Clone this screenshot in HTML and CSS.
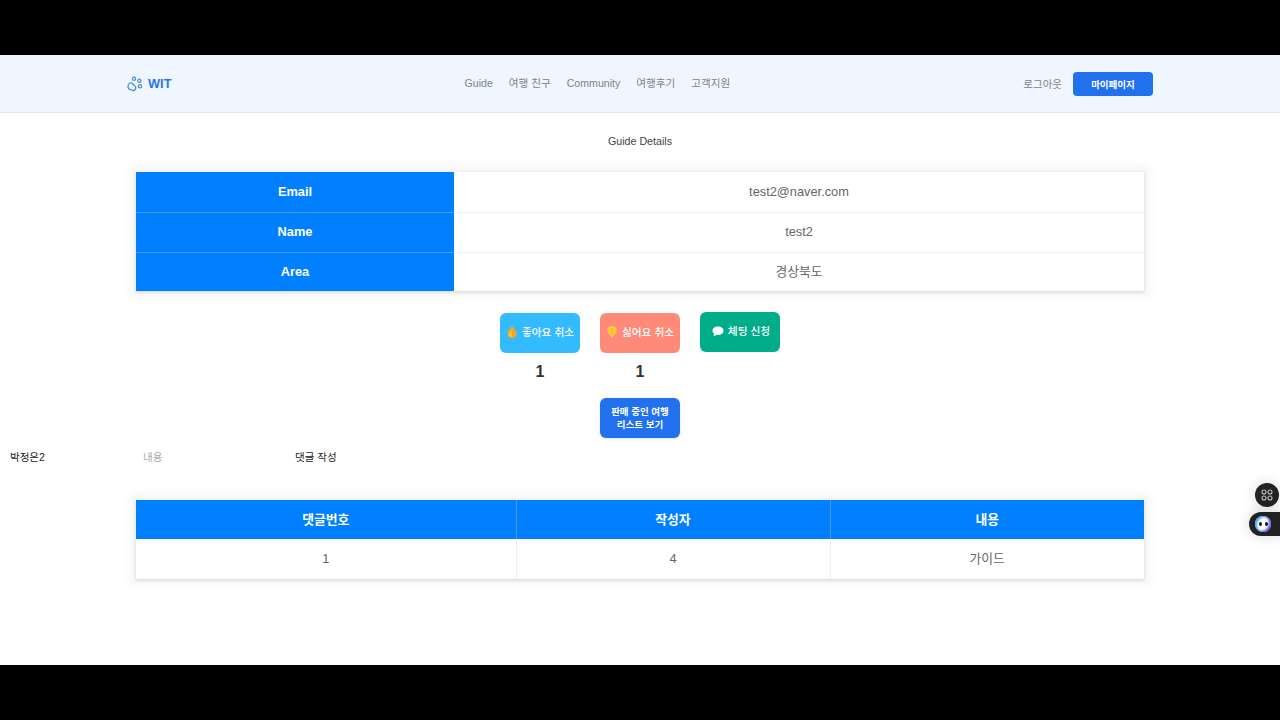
FILE: index.html
```html
<!DOCTYPE html>
<html lang="ko">
<head>
<title>Guide Details</title>
<meta charset="UTF-8">
<link rel="stylesheet" href="styles.css">
</head>
<body>
<div class="screen">
  <header class="topbar">
    <a class="logo">
      <svg class="logo-icon" width="16" height="16" viewBox="0 0 16 16" fill="none" stroke="#4a90e2" stroke-width="1.300">
        <path d="M1 10.500c0-2.200 1.600-3.600 3-3.600 1.300 0 1.600 1.100 2.600 1.900 1 .8 2.200 1.200 2.200 2.900 0 1.700-1.300 2.800-2.800 2.800-1.100 0-1.600-.7-2.600-.9C2.200 13.300 1 12.600 1 10.500z"/>
        <circle cx="7" cy="2.800" r="1.600"/>
        <circle cx="12.300" cy="4.800" r="1.600"/>
        <circle cx="13" cy="10.300" r="1.600"/>
      </svg>
      <span>WIT</span>
    </a>
    <nav class="nav">
      <a>Guide</a>
      <a>여행 친구</a>
      <a>Community</a>
      <a>여행후기</a>
      <a>고객지원</a>
    </nav>
    <div class="account">
      <a>로그아웃</a>
      <button class="mypage">마이페이지</button>
    </div>
  </header>

  <main>
    <h1 class="title">Guide Details</h1>

    <table class="info">
      <tr><th>Email</th><td>test2@naver.com</td></tr>
      <tr class="middle"><th>Name</th><td>test2</td></tr>
      <tr><th>Area</th><td>경상북도</td></tr>
    </table>

    <div class="actions">
      <div class="vote">
        <button class="btn like">
          <svg width="12" height="14" viewBox="0 0 12 14"><path fill="#f5a623" d="M6 1c1.500 2 3.500 4 4.500 6.500C11.500 10.500 9.500 13 6 13S.5 10.500 1.500 7.500C2.500 5 4.500 3 6 1z"/><path fill="#ffd25e" d="M5.500 5.500C4.500 7 3.500 8.500 3.500 10c0 1 .8 1.800 2 1.800z"/></svg>
          좋아요 취소
        </button>
        <span class="count">1</span>
      </div>
      <div class="vote">
        <button class="btn dislike">
          <svg width="12" height="14" viewBox="0 0 12 14"><path fill="#ffc83d" d="M6 1c3 0 4.800 1.800 4.800 4.300 0 2.500-2.300 4.200-3.300 5.700L6 13.500 4.500 11C3.500 9.500 1.200 7.800 1.200 5.300 1.200 2.800 3 1 6 1z"/><path fill="#e8a21a" d="M5.600 3h.8v6h-.8z"/></svg>
          싫어요 취소
        </button>
        <span class="count">1</span>
      </div>
      <button class="btn chat">
        <svg width="12" height="11" viewBox="0 0 12 11"><path fill="#fff" d="M6 .5c3.100 0 5.500 1.800 5.500 4.200S9.100 8.900 6 8.900c-.6 0-1.200-.1-1.700-.2C3.500 9.500 2.400 10 1.200 10c.6-.6 1-1.300 1.100-2.100C1.200 7.100.5 6 .5 4.700.5 2.300 2.900.5 6 .5z"/></svg>
        체팅 신청
      </button>
    </div>

    <div class="sales">
      <button class="btn list">판매 중인 여행<br>리스트 보기</button>
    </div>

    <form class="comment-form">
      <span class="writer">박정은2</span>
      <input class="comment-input" type="text" placeholder="내용">
      <button class="comment-submit" type="button">댓글 작성</button>
    </form>

    <table class="comments">
      <tr><th class="col-no">댓글번호</th><th class="col-writer">작성자</th><th>내용</th></tr>
      <tr><td>1</td><td>4</td><td>가이드</td></tr>
    </table>
  </main>
</div>

<div class="widget-menu">
  <svg width="12" height="12" viewBox="0 0 12 12" fill="none" stroke="#bdbdbd" stroke-width="1.100">
    <circle cx="3" cy="3" r="2"/>
    <circle cx="9" cy="3" r="2"/>
    <circle cx="3" cy="9" r="2"/>
    <circle cx="9" cy="9" r="2"/>
  </svg>
</div>
<div class="widget-bot">
  <span class="bot-face"><i></i><i></i></span>
</div>
</body>
</html>
```

FILE: styles.css
```css
* { box-sizing: border-box; }
html, body { height: 100%; }
body {
  margin: 0;
  padding: 55px 0;
  overflow: hidden;
  background: #000;
  color: #333;
  font-family: "Liberation Sans", "Noto Sans CJK KR", sans-serif;
}
.screen { height: 610px; background: #fff; }

.topbar {
  display: flex;
  justify-content: space-between;
  align-items: center;
  height: 58px;
  padding: 0 127px;
  background: #eff6fd;
  border-bottom: 1px solid #e3e8ec;
}
.logo {
  display: flex;
  align-items: center;
  gap: 5px;
  color: #2a74e6;
  font-size: 12.800px;
  font-weight: 700;
}
.nav { display: flex; align-items: baseline; gap: 16px; padding-bottom: 2px; font-size: 10.600px; line-height: 14px; color: #7a828a; }
.nav a { display: block; height: 14px; }
.account {
  display: flex;
  align-items: center;
  gap: 11px;
  font-size: 10.500px;
  color: #7a828a;
}
.mypage {
  width: 80px;
  height: 24px;
  padding: 0;
  border: 0;
  border-radius: 4px;
  background: #2170ee;
  color: #fff;
  font: 700 9.500px "Liberation Sans", "Noto Sans CJK KR", sans-serif;
}

.title {
  margin: 0;
  padding-top: 21px;
  height: 59px;
  text-align: center;
  color: #444;
  font-size: 10.700px;
  line-height: 14px;
  font-weight: 400;
}

table {
  display: table;
  width: 1008px;
  margin: 0 0 0 136px;
  border-collapse: collapse;
  table-layout: fixed;
  background: #fff;
  box-shadow: 0 1px 3px rgba(0,0,0,.15), 0 0 8px 6px rgba(0,0,0,.04);
}
th, td { padding: 0; text-align: center; font-size: 12.800px; line-height: 14px; }
th { background: #0080ff; color: #fff; font-weight: 700; }
td { color: #666; }

.info th { width: 318px; height: 40px; border-bottom: 1px solid #4a9ae8; }
.info td { height: 40px; border-bottom: 1px solid #f0f1f2; }
.info tr:last-child th, .info tr:last-child td { border-bottom: 0; height: 39px; }
.info .middle th, .info .middle td { padding-bottom: 1px; }

.actions {
  display: flex;
  justify-content: center;
  align-items: flex-start;
  gap: 20px;
  margin-top: 21px;
}
.vote { display: flex; flex-direction: column; align-items: center; padding-top: 1px; }
.count { margin-top: 10px; font-size: 16px; line-height: 18px; font-weight: 700; }
.btn {
  display: flex;
  align-items: center;
  justify-content: center;
  gap: 4px;
  width: 80px;
  height: 40px;
  padding: 0 0 2px;
  border: 0;
  border-radius: 6px;
  color: #fff;
  font: 500 10.700px/14px "Liberation Sans", "Noto Sans CJK KR", sans-serif;
}
.like { background: #33bbff; }
.dislike { background: #ff8a7a; }
.chat { background: #00ad8a; padding-left: 2px; }
.sales { display: flex; justify-content: center; margin-top: 17px; }
.list { padding: 0; background: #2170ee; font-weight: 700; font-size: 9.500px; line-height: 13px; box-shadow: 0 1px 3px rgba(0,0,0,.12); }

.comment-form { display: flex; align-items: center; height: 20px; margin-top: 9px; font-size: 10.500px; color: #222; }
.writer { width: 143px; padding: 0 0 2px 10px; }
.comment-input {
  width: 152px;
  height: 20px;
  padding: 0;
  border: 0;
  outline: 0;
  background: none;
  font: 10.500px "Liberation Sans", "Noto Sans CJK KR", sans-serif;
}
.comment-input::placeholder { color: #aaa; }
.comment-submit {
  padding: 0 0 2px;
  border: 0;
  background: none;
  color: #222;
  font: 10.500px "Liberation Sans", "Noto Sans CJK KR", sans-serif;
}

.comments { margin-top: 33px; }
.comments th { height: 39px; border-right: 1px solid #4a9ae8; }
.comments td { height: 40px; padding-bottom: 1px; border-right: 1px solid #f0f1f2; }
.comments th:last-child, .comments td:last-child { border-right: 0; }
.col-no { width: 380px; }
.col-writer { width: 314px; }

/* floating widgets sit on top of the page */
.widget-menu {
  position: absolute;
  left: 1255px;
  top: 483px;
  display: flex;
  align-items: center;
  justify-content: center;
  width: 24px;
  height: 24px;
  border-radius: 50%;
  background: #222;
  box-shadow: 0 0 10px 4px rgba(0,0,0,.08);
}
.widget-bot {
  position: absolute;
  left: 1249px;
  top: 512px;
  display: flex;
  align-items: center;
  width: 31px;
  height: 24px;
  padding-left: 6px;
  border-radius: 12px 0 0 12px;
  background: #222;
  box-shadow: 0 0 10px 4px rgba(0,0,0,.08);
}
.bot-face {
  display: flex;
  align-items: center;
  justify-content: center;
  gap: 3px;
  width: 16px;
  height: 16px;
  border-radius: 50%;
  background: #fff;
  box-shadow: inset -2px -1px 2px #5b5bf0, inset 2px 1px 2px #39a8ff;
}
.bot-face i { width: 3px; height: 4px; border-radius: 50%; background: #111; }
```
